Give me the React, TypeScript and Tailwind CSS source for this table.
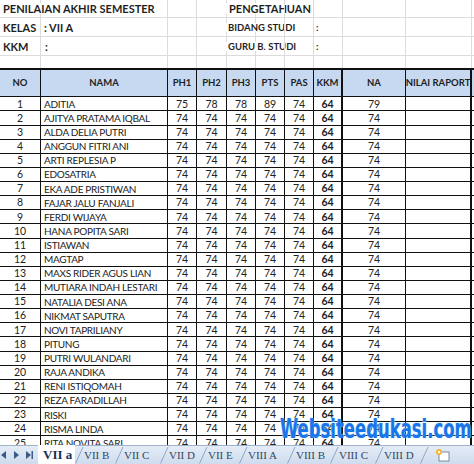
const students = [
  { no: 1, name: "ADITIA", ph1: 75, ph2: 78, ph3: 78, pts: 89, pas: 74, na: 79 },
  { no: 2, name: "AJITYA PRATAMA IQBAL" },
  { no: 3, name: "ALDA DELIA PUTRI" },
  { no: 4, name: "ANGGUN FITRI ANI" },
  { no: 5, name: "ARTI REPLESIA P" },
  { no: 6, name: "EDOSATRIA" },
  { no: 7, name: "EKA ADE PRISTIWAN" },
  { no: 8, name: "FAJAR JALU FANJALI" },
  { no: 9, name: "FERDI WIJAYA" },
  { no: 10, name: "HANA POPITA SARI" },
  { no: 11, name: "ISTIAWAN" },
  { no: 12, name: "MAGTAP" },
  { no: 13, name: "MAXS RIDER AGUS LIAN" },
  { no: 14, name: "MUTIARA INDAH LESTARI" },
  { no: 15, name: "NATALIA DESI ANA" },
  { no: 16, name: "NIKMAT SAPUTRA" },
  { no: 17, name: "NOVI TAPRILIANY" },
  { no: 18, name: "PITUNG" },
  { no: 19, name: "PUTRI WULANDARI" },
  { no: 20, name: "RAJA ANDIKA" },
  { no: 21, name: "RENI ISTIQOMAH" },
  { no: 22, name: "REZA FARADILLAH" },
  { no: 23, name: "RISKI" },
  { no: 24, name: "RISMA LINDA" },
  { no: 25, name: "RITA NOVITA SARI" },
];

const cols = "grid grid-cols-[41px_127px_29px_30px_29px_29px_29px_29px_63px_66px]";
const sheets = [
  { name: "VII B", w: "w-[40px]" },
  { name: "VII C", w: "w-[45px]" },
  { name: "VII D", w: "w-[39px]" },
  { name: "VII E", w: "w-[40px]" },
  { name: "VIII A", w: "w-[48px]" },
  { name: "VIII B", w: "w-[43px]" },
  { name: "VIII C", w: "w-[45px]" },
  { name: "VIII D", w: "w-[45px]" },
];

// light excel gridlines for the title rows
const GridRow = ({ h, children }: { h: string; children?: React.ReactNode[] }) => (
  <div className={`${cols} ${h} border-b border-[#dcdcdc]`}>
    {Array.from({ length: 10 }).map((_, i) => (
      <div key={i} className="border-r border-[#dcdcdc] relative whitespace-nowrap">
        {children && children[i]}
      </div>
    ))}
  </div>
);

const Slant = () => (
  <svg width="9" height="18" viewBox="0 0 9 18" className="shrink-0">
    <path d="M0.5 17.5 L8 1" stroke="#8ea6c8" strokeWidth="1" fill="none" />
  </svg>
);

export default function App() {
  const t = "bg-white font-bold text-[11px] leading-none text-[#1f1f1f] pl-[3px] pr-[2px]";
  const s = "bg-white font-bold text-[9.5px] leading-none text-[#1f1f1f] pl-[2px] pr-[2px]";
  return (
    <div className="w-[474px] h-[464px] relative overflow-hidden bg-white font-['Lato',sans-serif]">
      <div className="h-[445px] overflow-hidden">
        {/* title area */}
        <GridRow h="h-[18px]">
          {[
            <span className={`${t} absolute left-0 bottom-[3px]`}>PENILAIAN AKHIR SEMESTER</span>,
            null, null, null,
            <span className={`${t} absolute -left-[1px] bottom-[3px]`}>PENGETAHUAN</span>,
          ]}
        </GridRow>
        <GridRow h="h-[19px]">
          {[
            <span className={`${t} absolute left-0 bottom-[3px]`}>KELAS</span>,
            <span className={`${t} absolute left-0 bottom-[3px]`}>: VII A</span>,
            null, null,
            <span className={`${s} absolute -left-[1px] bottom-[4px]`}>BIDANG STUDI</span>,
            null, null,
            <span className={`${s} absolute left-0 bottom-[4px]`}>:</span>,
          ]}
        </GridRow>
        <GridRow h="h-[19px]">
          {[
            <span className={`${t} absolute left-0 bottom-[3px]`}>KKM</span>,
            <span className={`${t} absolute left-[1px] bottom-[3px]`}>:</span>,
            null, null,
            <span className={`${s} absolute -left-[1px] bottom-[4px]`}>GURU B. STUDI</span>,
            null, null,
            <span className={`${s} absolute left-0 bottom-[4px]`}>:</span>,
          ]}
        </GridRow>
        <div className={`${cols} h-[12px]`}>
          {Array.from({ length: 10 }).map((_, i) => (
            <div key={i} className="border-r border-[#dcdcdc]" />
          ))}
        </div>

        {/* header */}
        <div className={`${cols} h-[29.3px] border-t-2 border-b border-[#111] bg-[#c6d9f0] text-[9.5px] font-bold text-[#1f1f1f]`}>
          {["NO", "NAMA", "PH1", "PH2", "PH3", "PTS", "PAS", "KKM", "NA", "NILAI RAPORT"].map((h, i) => (
            <div
              key={h}
              className={`flex items-center justify-center whitespace-nowrap border-[#111] ${i === 7 || i === 9 ? "border-r-2" : "border-r"}`}
            >
              {h}
            </div>
          ))}
        </div>

        {/* data rows */}
        {students.map((st) => {
          const v = [st.ph1 ?? 74, st.ph2 ?? 74, st.ph3 ?? 74, st.pts ?? 74, st.pas ?? 74];
          return (
            <div key={st.no} className={`${cols} h-[14.14px] border-b border-[#111] text-[10.5px] leading-none text-[#222]`}>
              <div className="flex items-center justify-center border-r border-[#111]">{st.no}</div>
              <div className="flex items-center pl-[3px] border-r border-[#111] whitespace-nowrap overflow-hidden text-[10px] tracking-[-0.3px]">
                {st.name}
              </div>
              {v.map((n, i) => (
                <div key={i} className="flex items-center justify-center border-r border-[#111]">{n}</div>
              ))}
              <div className="flex items-center justify-center border-r-2 border-[#111] font-bold">64</div>
              <div className="flex items-center justify-center border-r border-[#111]">{st.na ?? 74}</div>
              <div className="border-r-2 border-[#111]" />
            </div>
          );
        })}
      </div>

      {/* sheet tabs */}
      <div className="h-[19px] flex items-stretch border-t border-[#9fb3cf] bg-gradient-to-b from-[#e4ecf7] to-[#cfdcee] font-['Liberation_Serif',serif] text-[#33465f] whitespace-nowrap">
        <div className="flex items-center gap-[7px] pl-[1px] w-[38px] shrink-0">
          <svg width="6" height="8" viewBox="0 0 6 8"><path d="M5 0 L0 4 L5 8 Z" fill="#3b5a86" /></svg>
          <svg width="5" height="8" viewBox="0 0 5 8"><path d="M0 0 L5 4 L0 8 Z" fill="#3b5a86" /></svg>
          <svg width="7" height="8" viewBox="0 0 7 8"><path d="M0 0 L5 4 L0 8 Z M5.5 0 H7 V8 H5.5 Z" fill="#3b5a86" /></svg>
        </div>
        <div className="w-[37px] shrink-0 flex items-center bg-white pl-[5px] -mt-[1px] font-bold text-[13px] leading-none text-[#1a2f55]">
          VII a
        </div>
        {sheets.map((sh) => (
          <div key={sh.name} className={`${sh.w} shrink-0 flex items-center`}>
            <Slant />
            <span className="text-[11px] leading-none">{sh.name}</span>
          </div>
        ))}
        <div className="flex items-center shrink-0">
          <Slant />
          <svg width="18" height="14" viewBox="0 0 18 14" className="ml-[5px]">
            <rect x="5" y="4" width="10" height="9" fill="#fff" stroke="#7a8aa0" />
            <circle cx="5" cy="4" r="3" fill="#f2b233" />
            <circle cx="5" cy="4" r="1.3" fill="#fff3c4" />
          </svg>
        </div>
      </div>

      {/* watermark */}
      <div className="absolute left-[280px] top-[415px] origin-left scale-x-[0.61] whitespace-nowrap leading-none font-['DejaVu_Sans',sans-serif] font-black text-[27px] text-[#1876ea] [text-shadow:0_0_2px_#a8d0ff,0_0_1px_#ffffff]">
        Websiteedukasi.com
      </div>
    </div>
  );
}
